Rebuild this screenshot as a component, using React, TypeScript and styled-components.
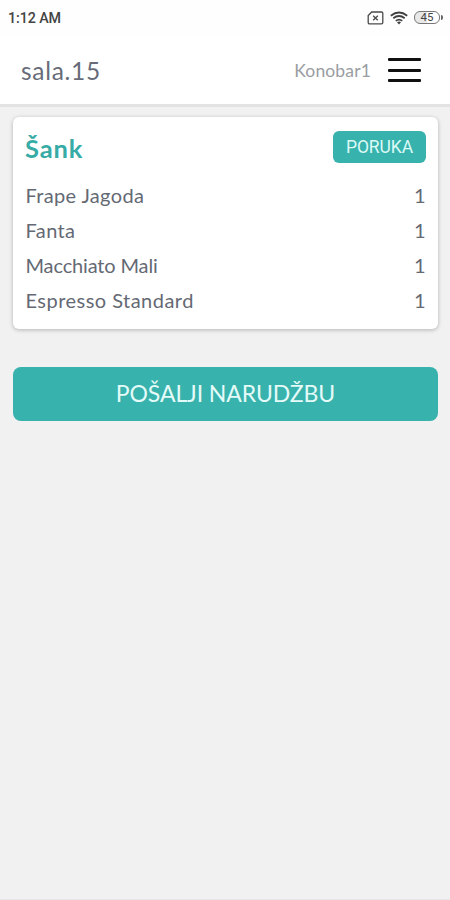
import React from "react";
import styled, { createGlobalStyle } from "styled-components";

const GlobalStyle = createGlobalStyle`
  *, *::before, *::after { box-sizing: border-box; }
  html, body { margin: 0; background: #f1f1f1; }
  button { font: inherit; border: 0; padding: 0; cursor: pointer; }
`;

const Screen = styled.div`
  display: flex;
  flex-direction: column;
  width: 100%;
  height: 900px;
  background: #f1f1f1;
  font-family: Lato, "Noto Sans", sans-serif;
  color: #646973;
  border-bottom: 1px solid #e8e8e8;
`;

const StatusBar = styled.div`
  display: flex;
  align-items: center;
  justify-content: space-between;
  height: 36px;
  flex: none;
  padding: 0 7px 0 8px;
  background: #fefefe;
`;

const Clock = styled.span`
  font: 500 14.3px/18px Roboto, sans-serif;
  letter-spacing: -0.1px;
  color: #444;
`;

const StatusIcons = styled.div`
  display: flex;
  align-items: center;
  gap: 6px;
  height: 18px;
  margin-top: -1px;
`;

const Header = styled.header`
  display: flex;
  align-items: center;
  height: 71px;
  flex: none;
  padding: 0 29px 0 21px;
  background: #fff;
  border-bottom: 3px solid #e3e3e3;
`;

const Room = styled.h1`
  margin: 1px auto 0 0;
  font-size: 24.5px;
  font-weight: 400;
  line-height: 30px;
  letter-spacing: 0.7px;
  color: #686c79;
`;

const Waiter = styled.span`
  margin: 1px 17px 0 0;
  font-size: 17.5px;
  line-height: 22px;
  letter-spacing: 0.15px;
  color: #9a9da2;
`;

const MenuButton = styled.button`
  display: flex;
  flex-direction: column;
  justify-content: space-between;
  width: 33px;
  height: 24px;
  background: none;
`;

const MenuLine = styled.span`
  height: 3px;
  border-radius: 1px;
  background: #101010;
`;

const Content = styled.main`
  display: flex;
  flex-direction: column;
  gap: 38px;
  padding: 10px 12px 0 13px;
`;

const Card = styled.section`
  height: 212px;
  padding: 14px 12px 0 12px;
  border-radius: 6px;
  background: #fff;
  box-shadow: 0 1px 4px rgba(0, 0, 0, 0.26);
`;

const CardHeader = styled.div`
  display: flex;
  align-items: center;
  justify-content: space-between;
  height: 32px;
  margin-bottom: 14px;
`;

const CardTitle = styled.h2`
  margin: 1px 0 0;
  font-size: 25.5px;
  line-height: 30px;
  font-weight: 700;
  letter-spacing: 0.9px;
  color: #37aba5;
`;

const MessageButton = styled.button`
  && {
    width: 93px;
    height: 32px;
    border-radius: 6px;
    background: #38b2ac;
    color: #dcfaf7;
    font: 400 17.5px/33px Roboto, sans-serif;
    letter-spacing: -0.1px;
  }
`;

const OrderList = styled.ul`
  margin: 0;
  padding: 0;
  list-style: none;
`;

const OrderRow = styled.li`
  display: flex;
  align-items: center;
  justify-content: space-between;
  height: 35px;
  font-size: 20px;
`;

const ItemName = styled.span<{ $tracking: number }>`
  margin-left: 0.5px;
  letter-spacing: ${({ $tracking }) => $tracking}px;
`;

const Quantity = styled.span`
  margin-right: 0.5px;
  font-size: 20px;
`;

const SubmitButton = styled.button`
  && {
    height: 54px;
    padding-bottom: 2px;
    border-radius: 8px;
    background: #38b2ac;
    color: #e4fbf9;
    font-size: 23px;
    letter-spacing: -0.1px;
  }
`;

const items = [
  { name: "Frape Jagoda", quantity: 1, tracking: 0.35 },
  { name: "Fanta", quantity: 1, tracking: 0.4 },
  { name: "Macchiato Mali", quantity: 1, tracking: -0.15 },
  { name: "Espresso Standard", quantity: 1, tracking: 0.47 },
];

const NoSimIcon = () => (
  <svg width="17" height="14" viewBox="0 0 17 14" fill="none" stroke="#4a4a4a" strokeWidth="1.3">
    <path d="M4.7 1h9.8a1.3 1.3 0 0 1 1.3 1.3v9.2a1.3 1.3 0 0 1-1.3 1.3h-12a1.3 1.3 0 0 1-1.3-1.3V4.6z" />
    <path d="M6.2 4.7l4.6 4.6M10.8 4.7L6.2 9.3" />
  </svg>
);

const WifiIcon = () => (
  <svg width="18" height="14" viewBox="0 0 18 14" fill="none" stroke="#404040" strokeWidth="1.8">
    <path d="M.8 4.7Q9-1.7 17.2 4.7M3.3 7.3q5.7-4.5 11.4 0M5.8 9.9q3.2-2.6 6.4 0" />
    <path d="M7 11.2q2-1.3 4 0l-2 2.3z" fill="#404040" stroke="none" />
  </svg>
);

const Battery = styled.div`
  display: flex;
  align-items: center;
`;

const BatteryBody = styled.span`
  width: 26px;
  height: 13px;
  border: 1.3px solid #777;
  border-radius: 6px;
  background: linear-gradient(90deg, #e8e8e8 48%, #fff 48%);
  text-align: center;
  font: 400 11.5px/11px Roboto, sans-serif;
  color: #444;
`;

const BatteryCap = styled.span`
  width: 2px;
  height: 5px;
  margin-left: 1px;
  border-radius: 0 2px 2px 0;
  background: #666;
`;

export default function App() {
  return (
    <Screen>
      <GlobalStyle />
      <StatusBar>
        <Clock>1:12 AM</Clock>
        <StatusIcons>
          <NoSimIcon />
          <WifiIcon />
          <Battery>
            <BatteryBody>45</BatteryBody>
            <BatteryCap />
          </Battery>
        </StatusIcons>
      </StatusBar>
      <Header>
        <Room>sala.15</Room>
        <Waiter>Konobar1</Waiter>
        <MenuButton aria-label="Meni">
          <MenuLine />
          <MenuLine />
          <MenuLine />
        </MenuButton>
      </Header>
      <Content>
        <Card>
          <CardHeader>
            <CardTitle>Šank</CardTitle>
            <MessageButton>PORUKA</MessageButton>
          </CardHeader>
          <OrderList>
            {items.map((item) => (
              <OrderRow key={item.name}>
                <ItemName $tracking={item.tracking}>{item.name}</ItemName>
                <Quantity>{item.quantity}</Quantity>
              </OrderRow>
            ))}
          </OrderList>
        </Card>
        <SubmitButton>POŠALJI NARUDŽBU</SubmitButton>
      </Content>
    </Screen>
  );
}
